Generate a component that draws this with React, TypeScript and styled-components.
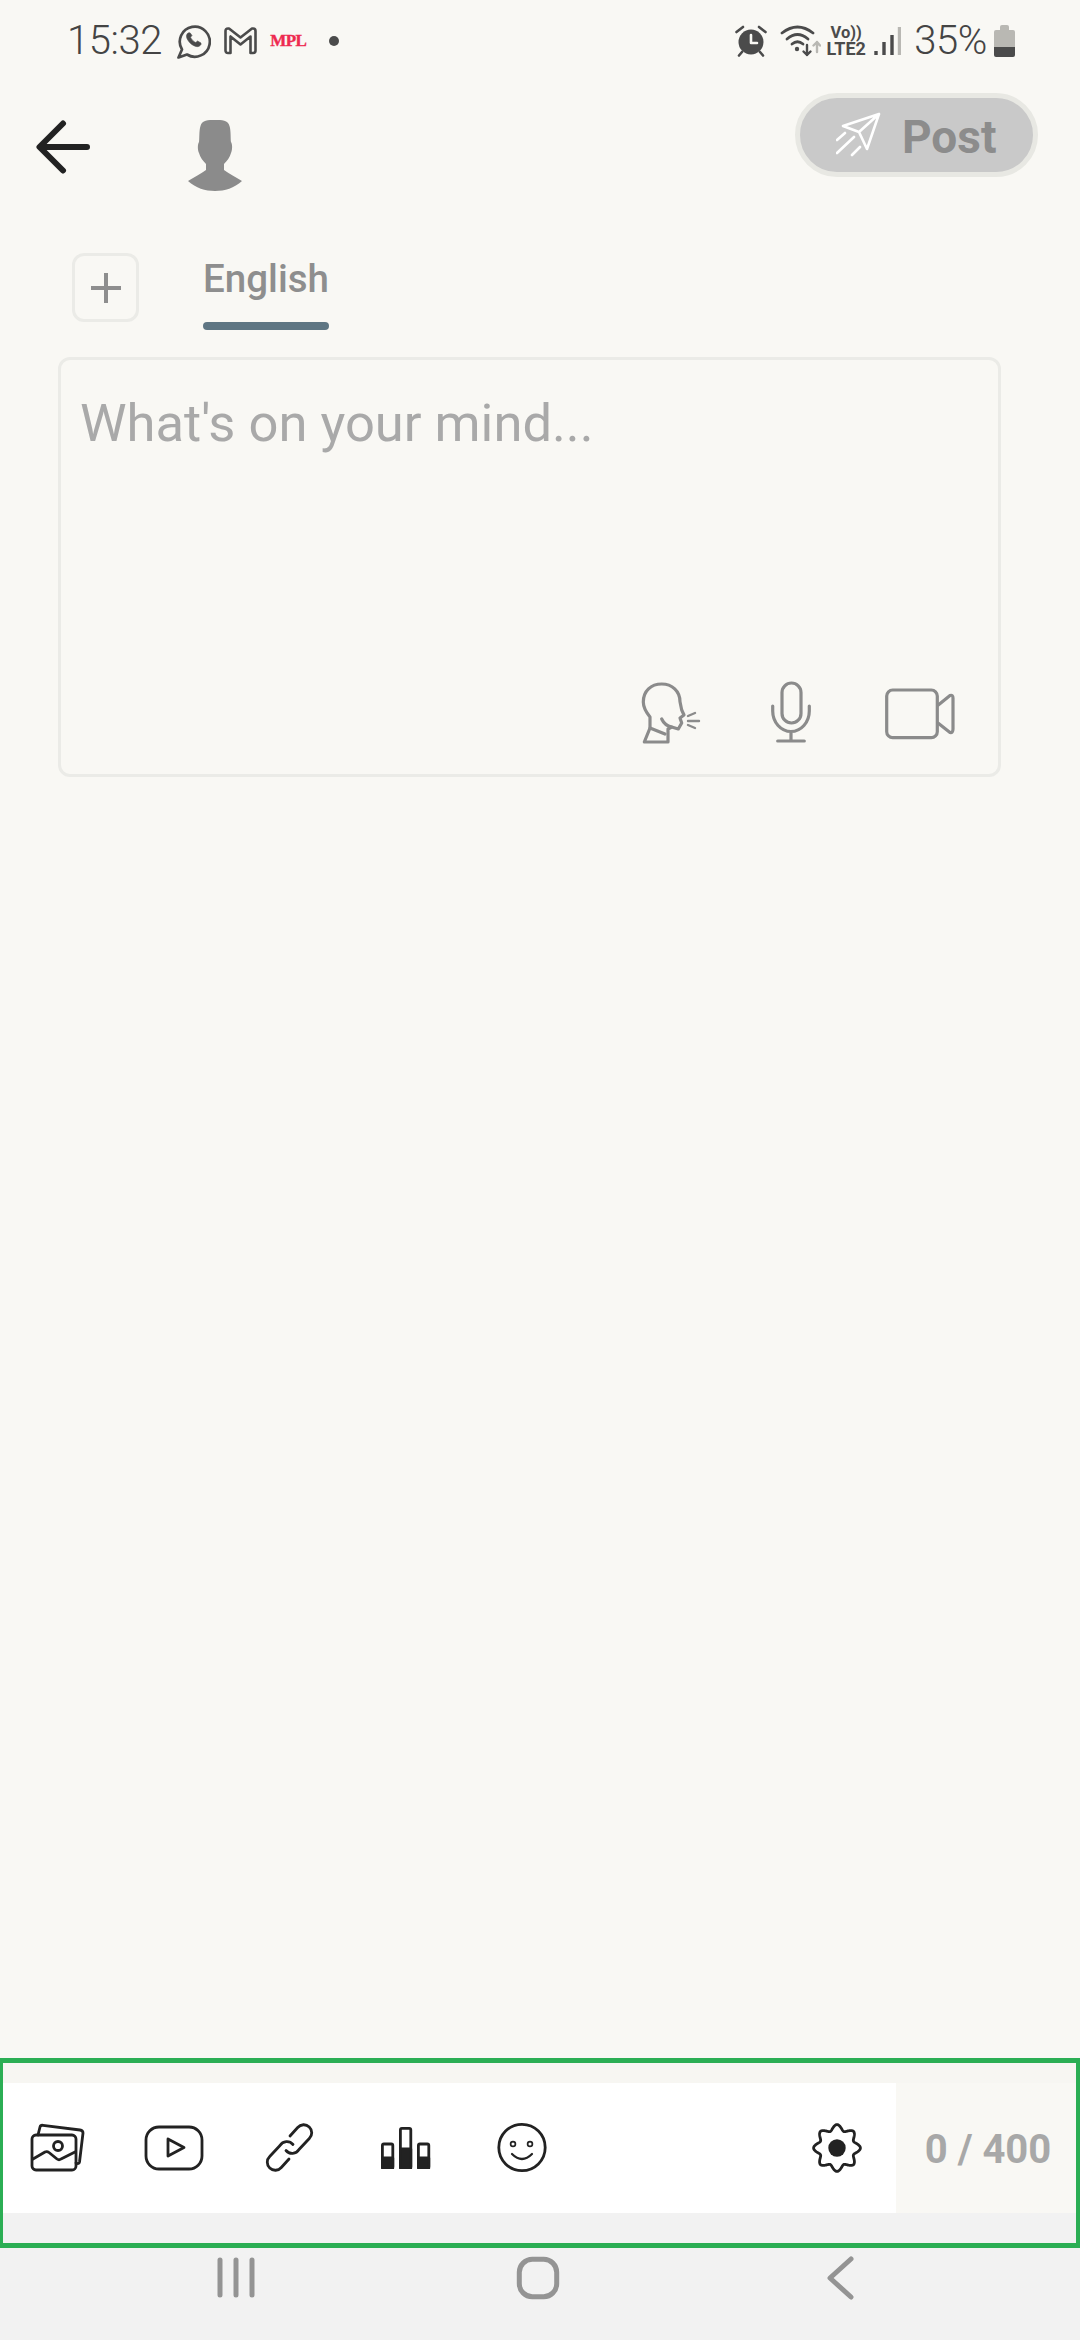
import React from "react";
import styled, { createGlobalStyle } from "styled-components";

const Global = createGlobalStyle`
  html, body { margin: 0; padding: 0; background: #f9f8f4; }
  #root { width: 1080px; }
  * { box-sizing: border-box; }
`;

const Page = styled.div`
  width: 1080px;
  height: 2340px;
  display: flex;
  flex-direction: column;
  background: #f9f8f4;
  font-family: Roboto, "Liberation Sans", sans-serif;
  overflow: hidden;
`;

/* status bar */
const StatusBar = styled.div`
  height: 82px;
  flex: none;
  display: flex;
  align-items: center;
  justify-content: space-between;
  padding: 0 65px 0 67px;
  color: #4b4b4b;
`;
const StatusGroup = styled.div`
  display: flex;
  align-items: center;
`;
const StatusText = styled.span<{ $ml?: number }>`
  font-size: 40px;
  font-weight: 300;
  letter-spacing: -0.4px;
  line-height: 46px;
  margin-left: ${(p) => p.$ml ?? 0}px;
  color: #444;
`;
const StatusIcon = styled.svg<{ $ml: number }>`
  display: block;
  flex: none;
  margin-left: ${(p) => p.$ml}px;
  fill: none;
  stroke: #4b4b4b;
  stroke-linecap: round;
  stroke-linejoin: round;
`;
const AppBadge = styled.span`
  margin-left: 13px;
  width: 36px;
  font-family: "Liberation Serif", serif;
  font-weight: 700;
  font-size: 17px;
  line-height: 16px;
  letter-spacing: -0.5px;
  white-space: nowrap;
  color: #ee2a50;
  -webkit-text-stroke: 0.4px #ee2a50;
`;
const NotifDot = styled.span`
  margin-left: 23px;
  width: 10px;
  height: 10px;
  border-radius: 50%;
  background: #4b4b4b;
`;
const VolteBadge = styled.div`
  margin-left: 5px;
  width: 40px;
  display: flex;
  flex-direction: column;
  align-items: center;
  font-weight: 700;
  color: #4b4b4b;
`;
const VolteTop = styled.span`
  font-size: 16.5px;
  line-height: 15px;
`;
const VolteBottom = styled.span`
  font-size: 18px;
  line-height: 17px;
  white-space: nowrap;
`;

/* header */
const Header = styled.div`
  height: 171px;
  flex: none;
  display: flex;
  align-items: flex-start;
`;
const BackIcon = styled.svg`
  margin: 38px 0 0 36px;
  flex: none;
  fill: none;
  stroke: #222;
  stroke-width: 6;
  stroke-linecap: round;
  stroke-linejoin: round;
`;
const Avatar = styled.svg`
  margin: 38px 0 0 96px;
  flex: none;
  fill: #8b8b8b;
`;
const PostButton = styled.div`
  margin: 11px 42px 0 auto;
  width: 243px;
  height: 84px;
  border: 5px solid #e8e8e3;
  border-radius: 42px;
  background: #c9c9c9;
  display: flex;
  align-items: center;
  padding-left: 36px;
`;
const PlaneIcon = styled.svg`
  flex: none;
  fill: none;
  stroke: #fff;
  stroke-width: 2.6;
  stroke-linecap: round;
  stroke-linejoin: round;
`;
const PostLabel = styled.span`
  margin-left: 20px;
  padding-top: 4px;
  font-size: 46px;
  font-weight: 700;
  line-height: 52px;
  color: #8c8c8c;
`;

/* language tabs */
const TabRow = styled.div`
  height: 77px;
  flex: none;
  display: flex;
  align-items: flex-start;
  padding-left: 72px;
`;
const AddBox = styled.div`
  width: 67px;
  height: 69px;
  border: 3.5px solid #ebebe7;
  border-radius: 12px;
  display: flex;
  align-items: center;
  justify-content: center;
`;
const PlusIcon = styled.svg`
  stroke: #8e8e8e;
  stroke-width: 4;
`;
const Tab = styled.div`
  margin-left: 64px;
  width: 126px;
  display: flex;
  flex-direction: column;
  align-items: center;
  padding-top: 3px;
`;
const TabLabel = styled.span`
  font-size: 38.5px;
  font-weight: 500;
  line-height: 46px;
  color: #8e8e8e;
`;
const TabUnderline = styled.span`
  margin-top: 20px;
  width: 100%;
  height: 8px;
  border-radius: 4px;
  background: #5f7683;
`;

/* editor */
const Editor = styled.div`
  margin: 27px 0 0 58px;
  width: 943px;
  height: 420px;
  flex: none;
  border: 3px solid #ebebe7;
  border-radius: 12px;
  display: flex;
  flex-direction: column;
`;
const Placeholder = styled.div`
  padding: 33px 0 0 19px;
  font-size: 52.5px;
  line-height: 60px;
  color: #a9a9a9;
`;
const EditorActions = styled.div`
  margin-top: auto;
  display: flex;
  justify-content: flex-end;
  align-items: flex-end;
  padding: 0 42px 30px 0;
`;
const ActionIcon = styled.svg<{ $ml?: number; $mb?: number }>`
  flex: none;
  margin-left: ${(p) => p.$ml ?? 0}px;
  margin-bottom: ${(p) => p.$mb ?? 0}px;
  fill: none;
  stroke: #8b8b8b;
  stroke-width: 3.2;
  stroke-linecap: round;
  stroke-linejoin: round;
`;

const Spacer = styled.div`
  flex: 1;
`;

/* footer */
const Footer = styled.div`
  position: relative;
  flex: none;
`;
const FooterShade = styled.div`
  height: 25px;
  background: #f7f6f2;
`;
const Toolbar = styled.div`
  height: 130px;
  display: flex;
  background: #f9f8f4;
`;
const ToolTray = styled.div`
  width: 896px;
  display: flex;
  align-items: center;
  background: #fff;
`;
const ToolSlot = styled.div<{ $w?: number; $push?: boolean }>`
  width: ${(p) => p.$w ?? 116}px;
  margin-left: ${(p) => (p.$push ? "auto" : "0")};
  display: flex;
  justify-content: center;
`;
const ToolIcon = styled.svg`
  display: block;
  fill: none;
  stroke: #222;
  stroke-width: 2.8;
  stroke-linecap: round;
  stroke-linejoin: round;
`;
const Counter = styled.div`
  flex: 1;
  display: flex;
  align-items: center;
  justify-content: center;
  font-size: 40px;
  font-weight: 700;
  color: #a8a8a8;
  padding-top: 2px;
`;
const NavBar = styled.div`
  height: 127px;
  display: flex;
  align-items: flex-start;
  padding: 43px 0 0 216px;
  background: #f2f2f2;
`;
const NavIcon = styled.svg<{ $ml?: number }>`
  flex: none;
  margin-left: ${(p) => p.$ml ?? 0}px;
  fill: none;
  stroke: #949494;
  stroke-width: 5;
  stroke-linecap: round;
  stroke-linejoin: round;
`;
const HighlightFrame = styled.div`
  position: absolute;
  top: 0;
  left: 0;
  right: 0;
  height: 190px;
  border: 5px solid #2bae54;
  border-left-width: 3px;
  border-right-width: 4px;
  pointer-events: none;
`;

const gearPath = (() => {
  const pts: string[] = [];
  for (let i = 0; i < 240; i++) {
    const t = (i / 240) * Math.PI * 2;
    const c = Math.cos(8 * t);
    const r = 20.6 + 2.6 * c + 0.2 * c * c * c;
    pts.push(`${(26 + r * Math.sin(t)).toFixed(2)} ${(26 - r * Math.cos(t)).toFixed(2)}`);
  }
  return `M${pts.join(" L")} Z`;
})();

export default function App() {
  return (
    <Page>
      <Global />
      <StatusBar>
        <StatusGroup>
          <StatusText>15:32</StatusText>
          <StatusIcon $ml={14} width="35" height="36" viewBox="0 0 35 36" strokeWidth="2.7">
            <path d="M6 26.5 L2.5 34.5 L11 31.5 A15 15 0 1 0 6 26.5 Z" />
            <path
              d="M12 10 C10.5 11 10 13 11 15.5 C12.5 19 16 22.5 20 23.5 C22.5 24 24 23 25 21.5 L25 20 L21.5 18 L19.8 19.6 C17.5 18.5 15.5 16.5 14.5 14.2 L16 12.5 L14.2 10 Z"
              fill="#4b4b4b"
              strokeWidth="0.6"
            />
          </StatusIcon>
          <StatusIcon $ml={13} width="33" height="28" viewBox="0 0 33 28" strokeWidth="2.6">
            <path d="M1.5 4 Q1.5 1.5 4 1.5 H5 L16.5 10.5 L28 1.5 H29 Q31.5 1.5 31.5 4 V23.5 Q31.5 26 29 26 H26.5 V9.5 L16.5 17.5 L6.5 9.5 V26 H4 Q1.5 26 1.5 23.5 Z" />
          </StatusIcon>
          <AppBadge>MPL</AppBadge>
          <NotifDot />
        </StatusGroup>
        <StatusGroup>
          <StatusIcon width="32" height="32" viewBox="0 0 32 32" $ml={0} strokeWidth="2.6">
            <circle cx="16" cy="17" r="12.5" fill="#4b4b4b" stroke="none" />
            <path d="M16 10 V18 H22" stroke="#f9f8f4" />
            <path d="M1.5 7 L8 2 M24 2 L30.5 7 M7 27 L4 30.5 M25 27 L28 30.5" />
          </StatusIcon>
          <StatusIcon $ml={13} width="41" height="34" viewBox="0 0 41 34" strokeWidth="2.8">
            <path d="M2 9 Q17.5 -3 33 9" />
            <path d="M7 15 Q17.5 6 28 15" />
            <path d="M12 20 Q17.5 15.5 23 20" />
            <circle cx="17" cy="25" r="2.2" fill="#4b4b4b" stroke="none" />
            <path d="M27 21 V31 M23.5 27.5 L27 31 L30.5 27.5" strokeWidth="2.4" />
            <path d="M37 28 V18 M33.5 21.5 L37 18 L40 21.5" stroke="#b9b8b3" strokeWidth="2.4" />
          </StatusIcon>
          <VolteBadge>
            <VolteTop>Vo))</VolteTop>
            <VolteBottom>LTE2</VolteBottom>
          </VolteBadge>
          <StatusIcon $ml={8} width="27" height="30" viewBox="0 0 27 30" strokeWidth="3.4">
            <path d="M2 25 V29 M10 16 V29 M18 9 V29" strokeLinecap="butt" />
            <path d="M25.5 1 V29" stroke="#b9b8b3" strokeLinecap="butt" />
          </StatusIcon>
          <StatusText $ml={13}>35%</StatusText>
          <StatusIcon $ml={7} width="21" height="33" viewBox="0 0 21 33" stroke="none">
            <path d="M6 2 Q6 0 8 0 H13 Q15 0 15 2 V5 H6 Z" fill="#b9b8b3" stroke="none" />
            <path d="M0 7 Q0 5 2 5 H19 Q21 5 21 7 V22 H0 Z" fill="#b9b8b3" stroke="none" />
            <path d="M0 22 H21 V30 Q21 32 19 32 H2 Q0 32 0 30 Z" fill="#4b4b4b" stroke="none" />
          </StatusIcon>
        </StatusGroup>
      </StatusBar>

      <Header>
        <BackIcon width="56" height="54" viewBox="0 0 56 54">
          <path d="M51 27 H4 M27 3.5 L3.5 27 L27 50.5" />
        </BackIcon>
        <Avatar width="54" height="71" viewBox="0 0 54 71">
          <path d="M27 0 C20 0 14 0 12.5 6 C11 10 11.5 20 11 22 C9.5 24 9.5 30 11 33 C12 37 15 41 18 44 L18 50 C13 54 6 57 0 61 C8 68 17 71 27 71 C37 71 46 68 54 61 C48 57 41 54 36 50 L36 44 C39 41 42 37 43 33 C44.5 30 44.5 24 43 22 C42.5 20 43 10 41.5 6 C40 0 34 0 27 0 Z" />
        </Avatar>
        <PostButton>
          <PlaneIcon width="46" height="46" viewBox="0 0 46 46">
            <path d="M43 2 L7 14 L23 20 L31 37 Z M43 2 L23 20" />
            <path d="M1 28 L9 21 M1 41 L18 25 M16 43 L24 35" />
          </PlaneIcon>
          <PostLabel>Post</PostLabel>
        </PostButton>
      </Header>

      <TabRow>
        <AddBox>
          <PlusIcon width="30" height="30" viewBox="0 0 30 30">
            <path d="M0 15 H30 M15 0 V30" />
          </PlusIcon>
        </AddBox>
        <Tab>
          <TabLabel>English</TabLabel>
          <TabUnderline />
        </Tab>
      </TabRow>

      <Editor>
        <Placeholder>What's on your mind...</Placeholder>
        <EditorActions>
          <ActionIcon width="62" height="64" viewBox="0 0 62 64">
            <path d="M4.3 62 L10 48 V37 C6 32 3.3 27 3.3 22 C3.3 11 11 4 21.7 4 C32 4 40 11 40 21.7 L41.7 30 L44 35 L40 38 L41.7 43 L38.3 49 L31.7 47 L28 49 V62 Z" />
            <path d="M21.7 39 C24 44 27 46 31.7 47 M10 48 L25 54" />
            <path d="M48 36 L55 33 M48 41 H59 M48 45 L55 48" strokeWidth="2.4" />
          </ActionIcon>
          <ActionIcon $ml={68} width="42" height="64" viewBox="0 0 42 64">
            <rect x="12" y="3" width="19" height="40" rx="9.5" />
            <path d="M2.7 26 V31 A18.3 20.5 0 0 0 39.3 31 V26 M21 52 V60 M7.7 61 H34.3" />
          </ActionIcon>
          <ActionIcon $ml={72} $mb={4} width="72" height="52" viewBox="0 0 72 52">
            <rect x="2.7" y="2" width="50.6" height="47.7" rx="6" />
            <path d="M54.3 17 L66 7.5 Q69 6.5 69 10 V41 Q69 45 66 44.5 L54.3 35.3" />
          </ActionIcon>
        </EditorActions>
      </Editor>

      <Spacer />

      <Footer>
        <FooterShade />
        <Toolbar>
          <ToolTray>
            <ToolSlot>
              <ToolIcon width="56" height="50" viewBox="0 0 56 50" strokeWidth="2.6">
                <rect x="2" y="12" width="44" height="35" rx="4" />
                <path d="M8 12 L10 4 Q10.5 2 13 2.3 L50 7 Q53 7.4 53 10 L49.5 39 Q49 41.5 46 40" />
                <path d="M3 36 L15 29 Q17 28 19 29.5 L27 36 Q29 37.5 31 36 L45 29" />
                <circle cx="28" cy="23" r="4.5" />
              </ToolIcon>
            </ToolSlot>
            <ToolSlot>
              <ToolIcon width="60" height="46" viewBox="0 0 60 46" strokeWidth="3">
                <rect x="2" y="2" width="56" height="42" rx="13" />
                <path d="M24 14 L40 22.5 L24 31 Z" />
              </ToolIcon>
            </ToolSlot>
            <ToolSlot>
              <ToolIcon width="52" height="50" viewBox="0 0 52 50" strokeWidth="3">
                <path d="M26 13 L33.7 4.5 A8 8 0 1 1 45.3 15.5 L35 26.5 A8 8 0 0 1 22 27.5" />
                <path d="M25 36 L17.3 44.5 A8 8 0 1 1 5.7 33.5 L16 22.5 A8 8 0 0 1 29 21.5" />
              </ToolIcon>
            </ToolSlot>
            <ToolSlot>
              <ToolIcon width="50" height="42" viewBox="0 0 50 42">
                <rect x="1.4" y="17" width="10.4" height="24" rx="1.5" />
                <rect x="1.4" y="31" width="10.4" height="10" fill="#222" />
                <rect x="19.4" y="1.4" width="10.4" height="39.6" rx="1.5" />
                <rect x="19.4" y="22" width="10.4" height="19" fill="#222" />
                <rect x="37.4" y="17" width="10.4" height="24" rx="1.5" />
                <rect x="37.4" y="31" width="10.4" height="10" fill="#222" />
              </ToolIcon>
            </ToolSlot>
            <ToolSlot>
              <ToolIcon width="52" height="52" viewBox="0 0 52 52" strokeWidth="2">
                <circle cx="26" cy="25.5" r="23.2" />
                <circle cx="17" cy="22" r="2.4" strokeWidth="1.7" />
                <circle cx="34" cy="22" r="2.4" strokeWidth="1.7" />
                <path d="M16 32 Q26 42 36 32" strokeWidth="2.2" />
              </ToolIcon>
            </ToolSlot>
            <ToolSlot $w={118} $push>
              <ToolIcon width="52" height="52" viewBox="0 0 52 52" strokeWidth="2.6">
                <path d={gearPath} />
                <circle cx="26" cy="26" r="8.7" fill="#222" stroke="none" />
              </ToolIcon>
            </ToolSlot>
          </ToolTray>
          <Counter>0 / 400</Counter>
        </Toolbar>
        <NavBar>
          <NavIcon width="40" height="42" viewBox="0 0 40 42">
            <path d="M4 4 V39 M20 4 V39 M36 4 V39" />
          </NavIcon>
          <NavIcon $ml={259} width="46" height="46" viewBox="0 0 46 46" strokeWidth="4.6">
            <rect x="4.3" y="3.3" width="37.4" height="37.4" rx="13" />
          </NavIcon>
          <NavIcon $ml={265} width="29" height="44" viewBox="0 0 29 44">
            <path d="M25 3 L4 22 L25 41" />
          </NavIcon>
        </NavBar>
        <HighlightFrame />
      </Footer>
    </Page>
  );
}
